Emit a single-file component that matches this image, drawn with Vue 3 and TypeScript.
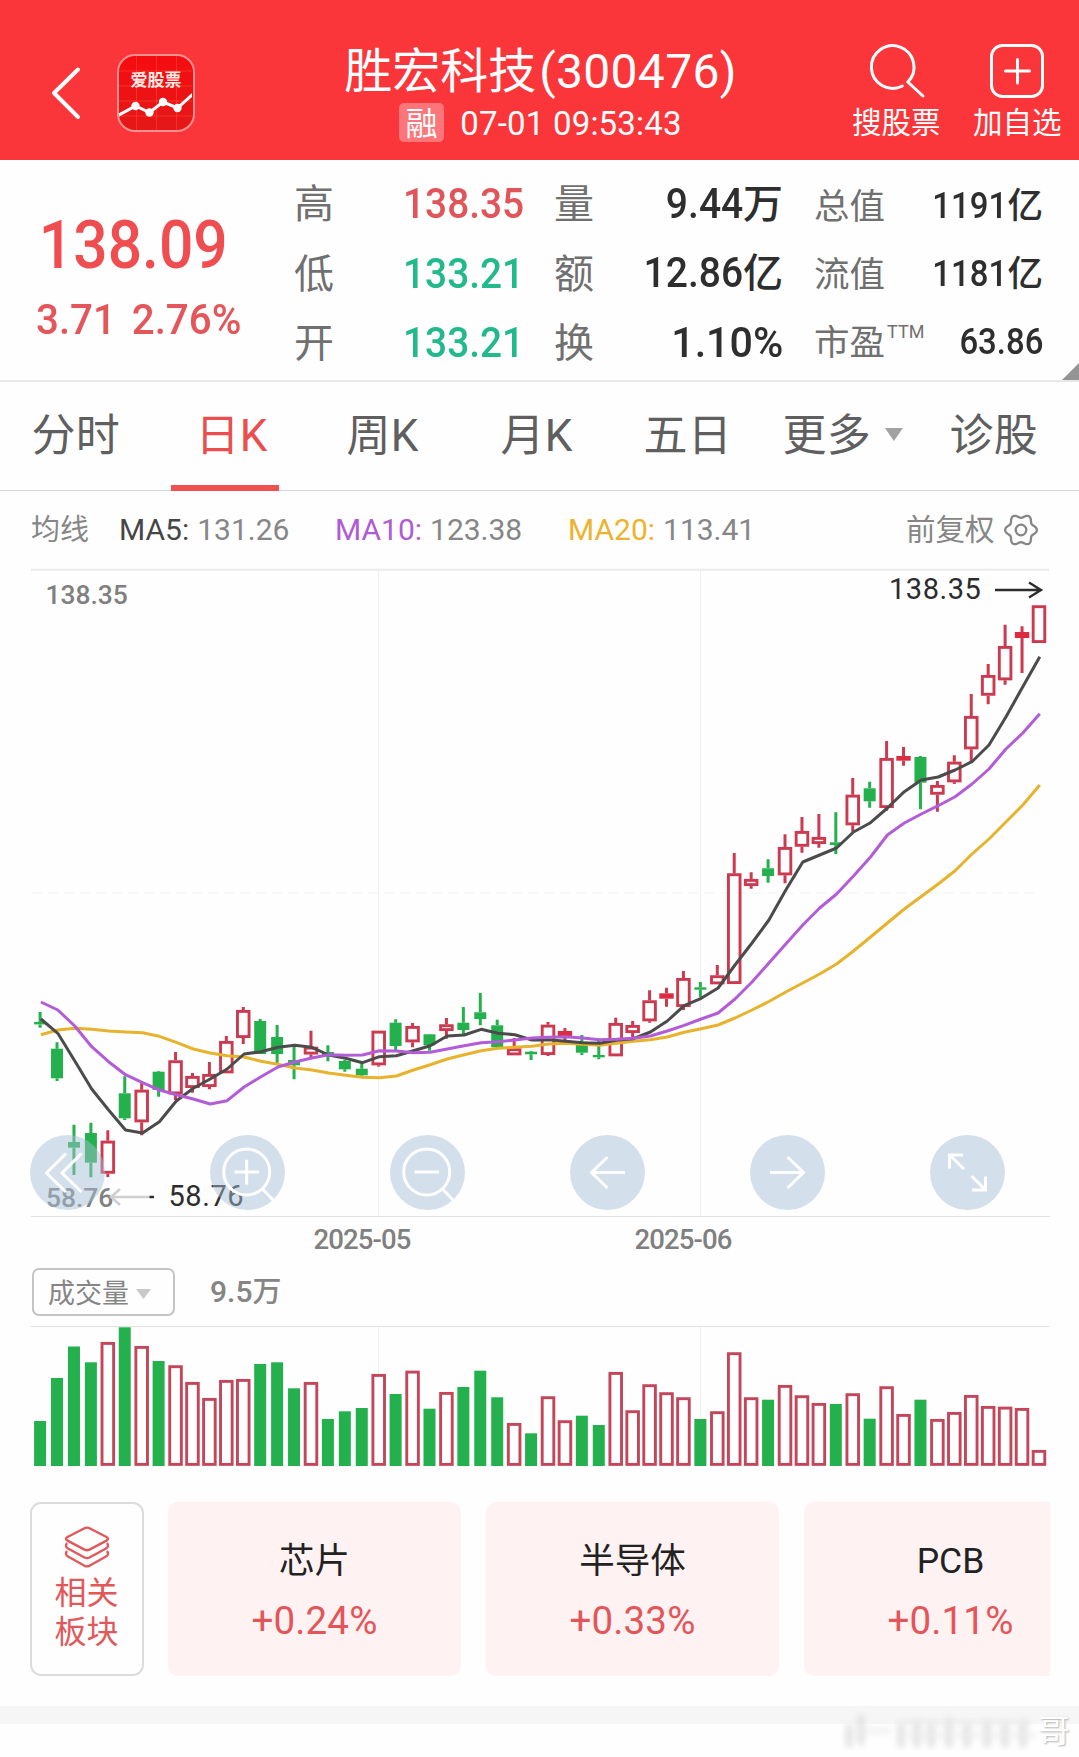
<script setup lang="ts">
type Side = 'u' | 'd' | 's'
type Candle = [Side, number, number, number, number]

const STEP = 16.93
const FIRST_X = 40.1
const cx = (i: number): number => FIRST_X + i * STEP

// side (u: hollow rise, s: solid rise, d: fall), high, body top, body bottom, low
const candles: Candle[] = [
  ['d', 1012, 1022, 1024.4, 1027.7], ['d', 1042.3, 1048.7, 1078.3, 1081], ['d', 1124.7, 1142, 1147.7, 1175],
  ['d', 1122.7, 1133, 1162.7, 1177.3], ['u', 1130.3, 1140.7, 1173.7, 1177], ['d', 1076.3, 1093.3, 1118.3, 1120],
  ['u', 1083.3, 1089.7, 1122.3, 1135.3], ['d', 1071, 1071.7, 1090, 1096.7], ['u', 1052, 1060.3, 1094.3, 1100],
  ['u', 1073, 1076, 1088, 1092.7], ['u', 1062, 1074, 1087, 1089.3], ['u', 1036, 1041, 1073.3, 1073.3],
  ['u', 1007, 1010, 1038, 1044], ['d', 1019, 1021, 1054, 1054], ['d', 1025, 1037, 1054, 1063.3],
  ['d', 1046.7, 1060, 1065.3, 1079.3], ['u', 1030.7, 1046.7, 1054.5, 1057], ['d', 1045.3, 1052, 1056, 1061.3],
  ['d', 1060, 1061, 1069.3, 1071.7], ['d', 1063.3, 1068.7, 1075.3, 1077.3], ['u', 1030.7, 1030.7, 1065.3, 1066.7],
  ['d', 1019.3, 1022.7, 1046, 1050], ['u', 1023, 1026, 1042.3, 1047.3], ['d', 1034, 1034.3, 1045.3, 1050.7],
  ['u', 1018, 1024.3, 1031, 1038.7], ['d', 1007, 1022.7, 1030, 1034], ['d', 993, 1012.3, 1019, 1025.3],
  ['d', 1019.7, 1025.3, 1047.3, 1047.3], ['u', 1038, 1048.3, 1055.3, 1055.3], ['d', 1051, 1051.7, 1054.3, 1060],
  ['u', 1022, 1024.7, 1055, 1056], ['s', 1028, 1031, 1036, 1040], ['d', 1035, 1041.7, 1052.7, 1055],
  ['d', 1040.3, 1055, 1057.3, 1059.3], ['u', 1017.7, 1023, 1056.3, 1056.3], ['u', 1021, 1025, 1033, 1038.7],
  ['u', 990.3, 1000.3, 1021.3, 1022.7], ['s', 987.7, 993.3, 998.7, 1006.7], ['u', 971, 978, 1007, 1010],
  ['d', 982, 987.3, 989.7, 997.3], ['u', 965, 975.3, 984.3, 984.3], ['u', 853, 873.3, 984, 984],
  ['u', 872.3, 879, 886, 888.7], ['d', 859.3, 868.3, 876, 882.7], ['u', 834.3, 847, 875.3, 883.3],
  ['u', 817, 831, 846.7, 852.7], ['u', 814, 837, 844, 847.7], ['d', 812.3, 842.3, 845, 854],
  ['u', 778, 794.7, 825.3, 831.7], ['d', 781.7, 788.3, 801.3, 807.7], ['u', 741, 758, 808, 810.7],
  ['s', 747, 756, 760.7, 765.7], ['d', 756, 757, 782.7, 809.3], ['u', 781, 785, 794.7, 811.7],
  ['u', 755.3, 761.7, 782.3, 784], ['u', 694, 716, 749.3, 761.7], ['u', 664, 675, 695.7, 704.3],
  ['u', 624.7, 646, 680.3, 684.7], ['s', 626.3, 632, 638, 673], ['u', 605.3, 605.3, 643, 643],
]

const ma5 = [
  1019, 1033.3, 1061, 1089, 1110, 1130, 1133, 1121.7, 1101, 1088.3, 1079, 1069, 1054, 1051.7, 1047.3,
  1045.3, 1047.3, 1055, 1058.3, 1062.7, 1056.7, 1055.7, 1050.7, 1045.7, 1036, 1035, 1029.3, 1033.3, 1034.7, 1040,
  1039.7, 1041.3, 1042.7, 1043.3, 1040.3, 1038.7, 1032, 1021, 1005.7, 998.3, 988, 965, 943, 920, 890,
  862, 855, 848, 832, 822.7, 808, 791.7, 780, 777, 770, 761.7, 745, 717, 686.7, 656.7,
]
const ma10 = [
  1002, 1010, 1026, 1046.7, 1061.7, 1074.7, 1082.7, 1090, 1094.7, 1099, 1104, 1100.7, 1087, 1076.7, 1067,
  1062, 1058, 1054.7, 1055.3, 1055, 1050.7, 1051, 1052.7, 1052.3, 1049, 1045.7, 1042.7, 1041.7, 1040, 1038,
  1037.3, 1036.7, 1038, 1039.7, 1039.3, 1038.3, 1036, 1031, 1025.3, 1019, 1013, 999, 982, 963, 944,
  925, 908, 894, 876, 857, 835, 823, 814, 805.7, 796.7, 784, 769, 749, 733, 713.7,
]
const ma20 = [
  1034.7, 1030, 1028.3, 1029.3, 1031, 1032, 1032.7, 1036.3, 1042.3, 1049, 1053, 1055.7, 1057, 1061.3, 1064.3,
  1068, 1070, 1073, 1075.3, 1077.3, 1077.7, 1076, 1070, 1064.7, 1059, 1054.7, 1050.7, 1048.3, 1047.3, 1046.3,
  1044, 1043.3, 1044.3, 1045.3, 1043.3, 1041.3, 1039.7, 1037, 1032.3, 1028.7, 1025, 1018, 1010, 1001.5, 992,
  983, 974, 964, 951, 937, 923, 909, 896.5, 884, 870.7, 854, 839, 822, 805, 785,
]
const line = (ys: number[]): string => ys.map((y, i) => `${(cx(i) + 0.8).toFixed(1)},${y}`).join(' ')

const lines = [
  { name: 'ma20', points: line(ma20) },
  { name: 'ma5', points: line(ma5) },
  { name: 'ma10', points: line(ma10) },
]

const volumeHeights = [
  45, 88, 119.5, 103.7, 124, 138.7, 120, 105, 100.7, 84, 68, 86, 87, 102, 103.7, 77.7, 84, 47, 54.7, 58,
  92, 72, 95.3, 57.3, 74, 79, 95.3, 68.7, 43, 32.7, 69.7, 45.7, 50.3, 41, 94, 55.7, 81.7, 73.7, 68.7, 47,
  54.7, 113.7, 68.7, 66.3, 81, 70.7, 63, 62, 72.7, 47.3, 79.7, 52, 66.3, 47, 54, 71, 60, 59.3, 58, 16,
]
const volumes = volumeHeights.map((h, i) => ({ h, up: candles[i][0] !== 'd', x: cx(i) }))
const VOL_BASE = 1466

const gearPath: string =
  Array.from({ length: 73 }, (_, i) => {
    const a = (i * Math.PI) / 36
    const r = 14 + 1.9 * Math.cos(6 * a)
    return `${i ? 'L' : 'M'}${(17 + r * Math.cos(a)).toFixed(2)} ${(17 + r * Math.sin(a)).toFixed(2)}`
  }).join('') + 'Z'

const quotes = [
  { label: '高', value: '138.35', tone: 'up' },
  { label: '低', value: '133.21', tone: 'down' },
  { label: '开', value: '133.21', tone: 'down' },
]
const turnover = [
  { label: '量', value: '9.44', unit: '万' },
  { label: '额', value: '12.86', unit: '亿' },
  { label: '换', value: '1.10%', unit: '' },
]
const worth = [
  { label: '总值', sup: '', value: '1191', unit: '亿' },
  { label: '流值', sup: '', value: '1181', unit: '亿' },
  { label: '市盈', sup: 'TTM', value: '63.86', unit: '' },
]
const tabs = ['分时', '日K', '周K', '月K', '五日', '更多', '诊股']
const averages = [
  { name: 'MA5:', value: '131.26', cls: 'c5' },
  { name: 'MA10:', value: '123.38', cls: 'c10' },
  { name: 'MA20:', value: '113.41', cls: 'c20' },
]
const sectors = [
  { name: '芯片', change: '+0.24%' },
  { name: '半导体', change: '+0.33%' },
  { name: 'PCB', change: '+0.11%' },
]
</script>

<template>
  <div class="page">
    <header class="header">
      <div class="head-left">
        <svg class="back" width="32" height="54" viewBox="0 0 32 54"><path d="M28 3.500 L4 27 L28 51" /></svg>
        <div class="logo">
          <svg width="73" height="74" viewBox="0 0 73 74">
            <path class="logo-grid" d="M17.500 0V74M37.500 0V74M57.500 0V74M0 15H73M0 30H73M0 45H73M0 60H73" />
            <polyline points="-1,59.500 16.500,50 30.500,56.500 44,46 58.500,52 74,38" />
            <circle cx="16.500" cy="50" r="4.200" /><circle cx="30.500" cy="56.500" r="4.200" />
            <circle cx="44" cy="46" r="4.200" /><circle cx="58.500" cy="52" r="4.200" />
          </svg>
          <span>爱股票</span>
        </div>
      </div>
      <div class="head-mid">
        <h1>胜宏科技<span>(300476)</span></h1>
        <div class="stamp"><span class="badge">融</span><span>07-01 09:53:43</span></div>
      </div>
      <div class="head-right">
        <div class="action">
          <svg width="88" height="60" viewBox="0 0 88 60"><path d="M50.300 46 A21.300 21.300 0 1 1 55.800 42 L71 56" /></svg>
          <span>搜股票</span>
        </div>
        <div class="action">
          <svg width="88" height="60" viewBox="0 0 88 60">
            <rect x="18.500" y="5.500" width="51" height="51" rx="11" /><path d="M32.500 31H56.500M44.500 19.500V43" />
          </svg>
          <span>加自选</span>
        </div>
      </div>
    </header>

    <section class="stats">
      <div class="price">
        <div class="last">138.09</div>
        <div class="delta">3.71 2.76%</div>
      </div>
      <div class="col quotes">
        <div v-for="q in quotes" :key="q.label" class="row">
          <span class="label">{{ q.label }}</span><span class="num" :class="q.tone">{{ q.value }}</span>
        </div>
      </div>
      <div class="col turnover">
        <div v-for="q in turnover" :key="q.label" class="row">
          <span class="label">{{ q.label }}</span><span class="num"><em :class="{ ratio: !q.unit }">{{ q.value }}</em><i>{{ q.unit }}</i></span>
        </div>
      </div>
      <div class="col worth">
        <div v-for="q in worth" :key="q.label" class="row">
          <span class="label">{{ q.label }}<b v-if="q.sup">{{ q.sup }}</b></span>
          <span class="num"><em>{{ q.value }}</em><i>{{ q.unit }}</i></span>
        </div>
      </div>
      <span class="corner"></span>
    </section>

    <nav class="tabs">
      <div v-for="t in tabs" :key="t" class="tab" :class="{ active: t === '日K' }">
        {{ t }}<span v-if="t === '更多'" class="caret"></span>
      </div>
    </nav>

    <div class="averages">
      <span class="avg-title">均线</span>
      <span v-for="a in averages" :key="a.name" class="avg" :class="a.cls"><b>{{ a.name }}</b>{{ a.value }}</span>
      <span class="adjust">前复权</span>
      <svg class="gear" width="34" height="34" viewBox="0 0 34 34"><path :d="gearPath" /><circle cx="17" cy="17" r="5.300" /></svg>
    </div>

    <section class="chart">
      <svg width="1079" height="690" viewBox="0 568 1079 690">
        <path class="frame" d="M31 569.800H1049" />
        <path class="frame thin" d="M31 1216.500H1050" />
        <path class="grid" d="M378.500 570V1216M700.500 570V1216" />
        <path class="grid dash" d="M32 893H1040" />
        <g v-for="(c, i) in candles" :key="i" :class="c[0]">
          <path class="wick" :d="`M${cx(i)} ${c[1]}V${c[2]}M${cx(i)} ${c[3]}V${c[4]}`" />
          <rect v-if="c[0] === 'u'" class="hollow" :x="cx(i) - 5.8" :y="c[2] + 1.4" width="11.6" :height="c[3] - c[2] - 2.8" />
          <rect v-else class="solid" :x="cx(i) - (c[0] === 's' ? 7.2 : 6)" :y="c[2]" :width="c[0] === 's' ? 14.4 : 12" :height="c[3] - c[2]" />
        </g>
        <polyline v-for="l in lines" :key="l.name" :class="['ma', l.name]" :points="l.points" />
        <text class="axis" x="45.500" y="604.400">138.35</text>
        <text class="axis" x="46" y="1206.500">58.76</text>
        <text class="mark" x="889" y="599">138.35</text>
        <path class="arrow" d="M995 590H1040M1029 582.500L1041 590L1029 597.500" />
        <text class="mark" x="168.500" y="1206">58.76</text>
        <path class="arrow faint" d="M152 1197H111M120 1189L111 1197L120 1205" />
        <path class="arrow" d="M149.500 1197H154" />
        <text class="date" x="362" y="1249">2025-05</text>
        <text class="date" x="683" y="1249">2025-06</text>
      </svg>
      <div class="tools">
        <svg viewBox="0 0 75 75"><circle class="disc" cx="37.500" cy="37.500" r="37.500" /><path d="M36 18.500L16.500 38L36 57M51.500 18.500L32 38L51.500 57" /></svg>
        <svg viewBox="0 0 75 75"><circle class="disc" cx="37.500" cy="37.500" r="37.500" /><circle cx="36.700" cy="37" r="23" /><path d="M24.500 37H49M36.700 24.700V49.500M53 54.500L63 65" /></svg>
        <svg viewBox="0 0 75 75"><circle class="disc" cx="37.500" cy="37.500" r="37.500" /><circle cx="36.700" cy="37" r="23" /><path d="M24.500 37H49M53 54.500L63 65" /></svg>
        <svg viewBox="0 0 75 75"><circle class="disc" cx="37.500" cy="37.500" r="37.500" /><path d="M55 37.500H22M37.500 22L21.500 37.500L37.500 53" /></svg>
        <svg viewBox="0 0 75 75"><circle class="disc" cx="37.500" cy="37.500" r="37.500" /><path d="M20 37.500H53M37.500 22L53.500 37.500L37.500 53" /></svg>
        <svg viewBox="0 0 75 75"><circle class="disc" cx="37.500" cy="37.500" r="37.500" /><path d="M19.500 33.500V20H33M20 20.500L34 34M41.500 41L55 54.500M42 55H55.500V41.500" /></svg>
      </div>
    </section>

    <div class="indicator">
      <div class="select">成交量<span class="caret"></span></div>
      <span class="amount">9.5<i>万</i></span>
    </div>

    <svg class="volume" width="1079" height="145" viewBox="0 1325 1079 145">
      <path class="frame thin" d="M31 1326.500H1049" />
      <path class="grid" d="M378.500 1327V1466M700.500 1327V1466" />
      <template v-for="(v, i) in volumes" :key="i">
        <rect v-if="v.up" class="vol-up" :x="v.x - 5.8" :y="VOL_BASE - v.h + 1.4" width="11.6" :height="v.h - 3" />
        <rect v-else class="vol-down" :x="v.x - 6" :y="VOL_BASE - v.h" width="12" :height="v.h" />
      </template>
    </svg>

    <section class="sectors">
      <div class="related">
        <svg width="46" height="42" viewBox="0 0 46 42">
          <path d="M20.500 2.200Q23 1 25.500 2.200L42.500 11Q45.500 12.800 42.500 14.600L25.500 23.600Q23 24.800 20.500 23.600L3.500 14.600Q.500 12.800 3.500 11Z" />
          <path d="M3 17Q.500 20.500 4 22.500L20.500 31.500Q23 32.700 25.500 31.500L42 22.500Q45.500 20.500 43 17" />
          <path d="M3 25Q.500 28.500 4 30.500L20.500 39.800Q23 41 25.500 39.800L42 30.500Q45.500 28.500 43 25" />
        </svg>
        <span>相关</span><span>板块</span>
      </div>
      <div class="cards">
        <div v-for="s in sectors" :key="s.name" class="card">
          <span class="name">{{ s.name }}</span><span class="change">{{ s.change }}</span>
        </div>
      </div>
    </section>
    <div class="strip"></div>
    <div class="signature">
      <svg width="205" height="40" viewBox="0 0 205 40">
        <path class="haze" d="M8 14V36M20 4V34M60 12V36M76 10V36M90 12V36M108 8V36M126 12V36M146 10V36M164 12V36M182 10V36" />
        <path class="haze light" d="M12 20H50M60 12H190M66 24H195" />
      </svg>
      <span>哥</span>
    </div>
  </div>
</template>

<style>
body { background: #fff; overflow: hidden; }
</style>

<style scoped>
.page { position: relative; width: 1079px; height: 1757px; overflow: hidden; background: #fefefe; font-family: Roboto, "Noto Sans CJK SC", sans-serif; }
svg { display: block; fill: none; }
i, em { font-style: normal; }
.header { height: 160px; box-sizing: border-box; display: grid; grid-template-columns: 1fr auto 1fr; background: #fa363b; color: #fff; }
.head-left { display: flex; padding: 54px 0 0 50px; }
.back { margin-top: 12px; stroke: #fff; stroke-width: 4; stroke-linecap: round; stroke-linejoin: round; }
.logo { position: relative; box-sizing: border-box; width: 78px; height: 78px; margin-left: 35px; border: 2.5px solid #ff9090; border-radius: 18px; overflow: hidden; background: linear-gradient(#f60c10, #e41818); }
.logo polyline { stroke: #fff; stroke-width: 3; }
.logo circle { fill: #fff; }
.logo-grid { stroke: #ff4a3c; stroke-width: 1; opacity: .55; }
.logo span { position: absolute; left: 0; right: 0; top: 14px; text-align: center; font-size: 17px; line-height: 20px; font-weight: 700; color: #ffe9e4; }
.head-mid { padding: 44px 0 0 2px; display: flex; flex-direction: column; align-items: center; }
h1 { margin: 0; font-size: 48px; line-height: 56px; font-weight: 400; white-space: nowrap; }
h1 span { margin-left: 3px; letter-spacing: .300px; }
.stamp { display: flex; gap: 16px; margin-top: 3px; height: 39px; line-height: 42px; font-size: 33px; letter-spacing: .200px; }
.badge { width: 45px; border-radius: 5px; background: rgba(255, 255, 255, .32); text-align: center; font-size: 32px; }
.head-right { display: flex; justify-content: flex-end; gap: 33px; padding: 40px 18px 0 0; }
.action { width: 88px; text-align: center; font-size: 29.500px; line-height: 46px; white-space: nowrap; }
.action svg { stroke: #fff; stroke-width: 3; stroke-linecap: round; stroke-linejoin: round; }

.stats { position: relative; height: 222px; box-sizing: border-box; display: flex; border-bottom: 2px solid #e8e8e8; font-weight: 500; color: #2e2e2e; }
.price { width: 294px; box-sizing: border-box; padding: 51px 0 0 36px; color: #f04d50; white-space: nowrap; }
.last, .delta { width: max-content; transform-origin: left; }
.last { font-size: 66px; line-height: 70px; padding-left: 3px; transform: scaleX(.918); }
.delta { font-size: 42px; line-height: 50px; margin-top: 14px; word-spacing: 6px; color: #e4565a; transform: scaleX(.96); }
.col { padding-top: 9px; white-space: nowrap; }
.row { display: flex; align-items: center; height: 69.500px; line-height: 69.500px; }
.label { font-size: 40px; font-weight: 400; color: #707070; position: relative; top: 1px; }
.num { font-size: 42px; }
.num em { display: inline-block; transform: scaleX(.93); transform-origin: right; }
.num em.ratio { transform: scaleX(.98); }
.num i { font-size: 40px; }
.quotes { width: 260px; }
.quotes .label { width: 109px; }
.quotes .num { transform: scaleX(.925); transform-origin: left; }
.up { color: #e1545a; }
.down { color: #22b98c; }
.turnover { width: 229px; }
.turnover .row, .worth .row { justify-content: space-between; }
.worth { width: 229px; margin-left: 31px; padding-top: 11.500px; }
.worth .row { height: 68px; line-height: 68px; }
.worth .label { font-size: 35.500px; }
.worth .num { font-size: 37px; }
.worth .num em { transform: scaleX(.89); }
.worth .num i { font-size: 35.500px; }
.worth b { font-size: 18px; font-weight: 400; vertical-align: 17px; line-height: 1; margin-left: 2px; }
.corner { position: absolute; right: 0; bottom: 0; width: 17px; height: 17px; background: #949494; clip-path: polygon(100% 0, 100% 100%, 0 100%); }

.tabs { height: 109px; box-sizing: border-box; display: grid; grid-template-columns: 164px 151px 154px 143px 139px 167px auto; padding-left: 31.500px; border-bottom: 1px solid #d8d9da; font-size: 44px; line-height: 109px; letter-spacing: .200px; color: #5f5f5f; white-space: nowrap; }
.tab.active { position: relative; color: #ea4f50; }
.tab.active::after { content: ""; position: absolute; left: -24.500px; bottom: 0; width: 108px; height: 6px; background: #ef5152; }
.caret { display: inline-block; width: 18px; height: 13px; margin-left: 14px; vertical-align: 10px; background: #a2a2a2; clip-path: polygon(0 0, 100% 0, 50% 100%); }

.averages { height: 77px; display: flex; align-items: center; padding-left: 31px; font-size: 30px; color: #868686; white-space: nowrap; line-height: 79px; }
.avg-title { width: 88px; font-size: 29px; line-height: 82px; }
.avg b { font-weight: 400; margin-right: 8px; }
.c5 { width: 216px; }
.c10 { width: 233px; }
.c20 { width: 338px; }
.c5 b { color: #464646; }
.c10 b { color: #b05bd6; }
.c20 b { color: #edb32c; }
.adjust { font-size: 29.500px; line-height: 82px; }
.gear { margin-left: 9.500px; stroke: #868686; stroke-width: 2.300; }

.chart { position: relative; height: 690px; }
.frame { stroke: #ebebec; stroke-width: 2; }
.frame.thin { stroke: #e2e2e3; stroke-width: 1; }
.grid { stroke: #efefef; stroke-width: 1; }
.dash { stroke-dasharray: 10 6; stroke: #f2f2f2; }
.wick { stroke-width: 3; }
.u .wick, .s .wick { stroke: #cc3a50; }
.d .wick { stroke: #24b14d; }
.hollow { stroke: #cc3a50; stroke-width: 2.900; }
.s .solid { fill: #dd2c40; }
.d .solid { fill: #24b14d; }
.ma { stroke-width: 3; stroke-linejoin: round; }
.ma5 { stroke: #4b4b4b; }
.ma10 { stroke: #b35cd8; }
.ma20 { stroke: #e8b32c; }
.axis, .date { font-size: 26.400px; font-weight: 500; fill: #808080; }
.date { font-size: 27.500px; text-anchor: middle; letter-spacing: -.900px; }
.mark { font-size: 29px; letter-spacing: .550px; fill: #2c2c2c; }
.arrow { stroke: #2c2c2c; stroke-width: 2.400; }
.arrow.faint { stroke: #cfcfcf; }
.tools { position: absolute; left: 30px; top: 567px; display: flex; gap: 105px; }
.tools svg { width: 75px; height: 75px; stroke: #fff; stroke-width: 3; }
.tools .disc { fill: rgba(165, 190, 213, .48); stroke: none; }

.indicator { height: 67px; display: flex; padding-left: 32px; box-sizing: border-box; padding-top: 10px; color: #858585; }
.select { width: 143px; height: 48px; box-sizing: border-box; border: 2px solid #c4c4c4; border-radius: 7px; padding-left: 14px; font-size: 27px; line-height: 48px; }
.select .caret { width: 15px; height: 10px; margin-left: 7px; vertical-align: 4px; background: #c9c9c9; }
.amount { margin-left: 35px; font-size: 30px; font-weight: 500; line-height: 48px; }
.amount i { font-size: 29px; }
.vol-up { stroke: #c4465a; stroke-width: 2.900; fill: #fff; }
.vol-down { fill: #24b14d; }

.sectors { display: flex; gap: 24px; margin: 32px 29px 0 30px; height: 174px; }
.related { flex: none; width: 114px; box-sizing: border-box; border: 2px solid #dcdcdc; border-radius: 11px; display: flex; flex-direction: column; align-items: center; padding: 22px 1px 0 0; font-size: 32px; line-height: 39px; color: #e2585a; }
.related svg { stroke: #e2585a; stroke-width: 2.400; margin-bottom: 6px; }
.cards { flex: 1; min-width: 0; display: flex; gap: 25px; overflow: hidden; }
.card { flex: none; width: 293px; border-radius: 10px; background: #fef2f3; display: flex; flex-direction: column; align-items: center; }
.name { font-size: 35.500px; line-height: 50px; margin-top: 34px; color: #222; }
.change { font-size: 38.500px; line-height: 50px; margin-top: 9.500px; color: #e4555a; letter-spacing: .150px; }
.strip { margin-top: 29.500px; height: 18.500px; background: #f6f6f6; }
.signature { position: absolute; right: 8px; bottom: 6px; width: 230px; height: 40px; display: flex; }
.haze { stroke: #dedede; stroke-width: 6; filter: blur(3px); }
.haze.light { stroke: #ececec; stroke-width: 4; }
.signature span { margin-left: -8px; font-size: 32px; line-height: 40px; color: #fff; text-shadow: 1px 1px 2px #b0b0b0; }
</style>
